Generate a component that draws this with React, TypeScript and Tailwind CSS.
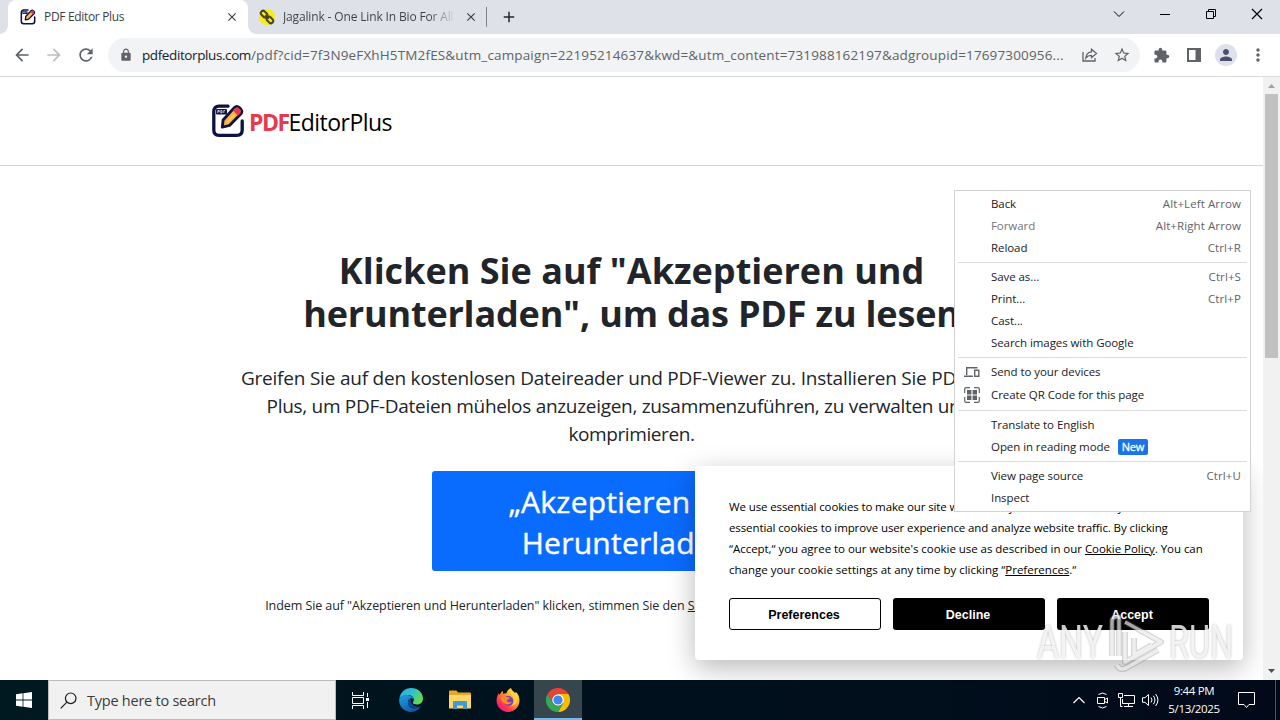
import React from 'react';
import {
  MdArrowBack,
  MdArrowForward,
  MdRefresh,
  MdLock,
  MdStarBorder,
  MdExtension,
  MdMoreVert,
  MdPerson,
  MdClose,
  MdAdd,
} from 'react-icons/md';

const PdfIcon = ({ className }: { className: string }) => (
  <svg viewBox="0 0 32 34" className={className} fill="none">
    <path d="M16 2.200H7Q1.800 2.200 1.800 7.600V26Q1.800 31.400 7 31.400H25Q30.200 31.400 30.200 26V17" stroke="#0d1240" strokeWidth="3.300" strokeLinecap="round" />
    <rect x="4" y="5" width="11" height="5.400" rx="1" fill="#0d1240" />
    <path d="M5.800 9V6.500h1.500v1.200H6M8.800 6.500v2.400H10V6.500zM13.200 6.500h-1.400V9" stroke="#fff" strokeWidth="0.700" />
    <path d="M10.300 23.200l.8-7.200L22.300 3.600q2.500-2.300 5 0l1.500 1.500q2.100 2.500 0 5L17.500 21.500z" fill="#fbb040" stroke="#0d1240" strokeWidth="2.800" strokeLinejoin="round" />
    <path d="M20.900 6.300l2.300-2.400q1.900-1.400 3.500 0l1.700 1.700q1.500 1.900 0 3.700L26 11.700z" fill="#e63950" />
    <path d="M15 18.500l7.500-8" stroke="#ffd27a" strokeWidth="1.400" />
  </svg>
);

const ChainIcon = () => (
  <svg viewBox="0 0 16 16" className="h-4 w-4" fill="none">
    <circle cx="8" cy="8" r="8" fill="#f8ec17" />
    <g transform="rotate(45 8 8)" stroke="#4a4420" strokeWidth="2">
      <rect x="0.200" y="5.700" width="7.400" height="4.600" rx="2.300" />
      <rect x="8.400" y="5.700" width="7.400" height="4.600" rx="2.300" />
      <path d="M5.500 8h5" />
    </g>
  </svg>
);

const TabStrip = () => (
  <div className="flex h-[34px] bg-[#dee1e8]">
    <div className="flex h-full w-[240px] ml-2 items-center rounded-t-lg bg-white pl-3 pr-[9px] relative">
      <span className="absolute -left-2 bottom-0 h-2 w-2 bg-[radial-gradient(circle_at_0_0,#dee1e8_7.5px,white_8px)]" />
      <span className="absolute -right-2 bottom-0 h-2 w-2 bg-[radial-gradient(circle_at_100%_0,#dee1e8_7.5px,white_8px)]" />
      <PdfIcon className="h-4 w-4" />
      <span className="ml-2 flex-1 text-[12px] tracking-[-0.33px] text-[#3c4043]">PDF Editor Plus</span>
      <MdClose className="h-3.5 w-3.5 text-[#3c4043]" />
    </div>
    <div className="flex h-full w-[239px] items-center pl-[11px] pr-[9px]">
      <ChainIcon />
      <span className="ml-2 w-[173px] overflow-hidden whitespace-nowrap text-[12px] tracking-[-0.15px] bg-[linear-gradient(90deg,#3c4043_84%,transparent)] bg-clip-text text-transparent">
        Jagalink - One Link In Bio For All
      </span>
      <MdClose className="ml-auto h-3.5 w-3.5 text-[#3c4043]" />
    </div>
    <span className="mt-[7px] h-5 w-px shrink-0 bg-[#808489] -ml-px" />
    <MdAdd className="ml-[13px] mt-2 h-[18px] w-[18px] text-[#25282c]" />
    <div className="ml-auto flex h-[28px] items-center text-black">
      <svg viewBox="0 0 46 28" className="h-7 w-[46px]" fill="none" stroke="currentColor">
        <path d="M18 11.500l5 5 5-5" />
      </svg>
      <svg viewBox="0 0 46 28" className="h-7 w-[46px]" fill="none" stroke="currentColor">
        <path d="M18 14.500h10" />
      </svg>
      <svg viewBox="0 0 46 28" className="h-7 w-[46px]" fill="none" stroke="currentColor">
        <path d="M18.500 11.500h7v7h-7zM20.500 11.500v-2h7v7h-2" />
      </svg>
      <svg viewBox="0 0 46 28" className="h-7 w-[46px]" fill="none" stroke="currentColor" strokeWidth="1.200">
        <path d="M18 9l10 10M28 9l-10 10" />
      </svg>
    </div>
  </div>
);

const Toolbar = () => (
  <div className="flex h-[43px] items-center border-b border-[#dadce0] bg-white text-[#5f6368]">
    <MdArrowBack className="ml-3 h-5 w-5" />
    <MdArrowForward className="ml-3 h-5 w-5 text-[#bcbec1]" />
    <MdRefresh className="ml-3 h-5 w-5" />
    <div className="ml-3 flex h-[34px] w-[1032px] items-center rounded-full bg-[#f1f3f4] pl-[11px] pr-[9px]">
      <MdLock className="h-3.5 w-3.5" />
      <span className="ml-[9px] w-[940px] whitespace-nowrap text-[13.5px] tracking-[0.145px]">
        <span className="text-[#202124] tracking-[-0.4px]">pdfeditorplus.com</span>
        /pdf?cid=7f3N9eFXhH5TM2fES&amp;utm_campaign=22195214637&amp;kwd=&amp;utm_content=731988162197&amp;adgroupid=17697300956...
      </span>
      <svg viewBox="0 0 16 16" className="h-4 w-4 shrink-0" fill="none" stroke="currentColor" strokeWidth="1.300">
        <path d="M1 5v9h12v-3M9.500 2.200l5 4.300-5 4.200V8.300Q6 8.200 3.800 11 4.500 5.200 9.500 4.800z" />
      </svg>
      <MdStarBorder className="ml-[15px] h-[18px] w-[18px] shrink-0" />
    </div>
    <MdExtension className="ml-[13px] h-[17px] w-[17px]" />
    <svg viewBox="0 0 14 14" className="ml-[17px] h-3.5 w-3.5">
      <path d="M0 0h14v14H0zM2 2v10h6.500V2z" fill="currentColor" fillRule="evenodd" />
    </svg>
    <span className="ml-3.5 flex h-[22px] w-[22px] items-center justify-center rounded-full bg-[#dee1ea] text-[#4b5070]">
      <MdPerson className="h-[18px] w-[18px]" />
    </span>
    <MdMoreVert className="ml-[11px] h-5 w-5" />
  </div>
);

const PageContent = () => (
  <main className="w-[1263px] bg-white text-[#212529]">
    <header className="flex h-[89px] items-center border-b border-[#d3d4d5] pl-[212px]">
      <PdfIcon className="h-[34px] w-8" />
      <span className="ml-[5px] mt-[2px] text-[23px] tracking-[-0.55px] text-black">
        <b className="font-bold tracking-[-1.5px] text-[#e63950]">PDF</b>EditorPlus
      </span>
    </header>
    <div className="flex flex-col items-center whitespace-nowrap pt-[83px] text-center">
      <h1 className="text-[36px] font-bold leading-[43px]">
        <span className="block">Klicken Sie auf "Akzeptieren und</span>
        <span className="block tracking-[-0.19px]">herunterladen", um das PDF zu lesen</span>
      </h1>
      <p className="mt-[29px] text-[19px] leading-[28px]">
        <span className="block tracking-[-0.21px]">Greifen Sie auf den kostenlosen Dateireader und PDF-Viewer zu. Installieren Sie PDF Editor</span>
        <span className="block tracking-[-0.3px]">Plus, um PDF-Dateien mühelos anzuzeigen, zusammenzuführen, zu verwalten und zu</span>
        <span className="block tracking-[-0.4px]">komprimieren.</span>
      </p>
      <button className="mt-[23px] h-[100px] w-[400px] rounded-[3px] bg-[#0a6cff] pt-px text-[30px] leading-[41px] tracking-[0.25px] text-white [-webkit-text-stroke:0.4px_white]">
        <span className="block">„Akzeptieren und</span>
        <span className="block">Herunterladen“</span>
      </button>
      <p className="mt-[25px] text-[12.5px] leading-[20px] tracking-[-0.075px]">
        Indem Sie auf "Akzeptieren und Herunterladen" klicken, stimmen Sie den <u>Servicebedingungen und der Datenschutzrichtlinie zu.</u>
      </p>
    </div>
  </main>
);

const Scrollbar = () => (
  <div className="flex w-[17px] flex-col items-center bg-[#f1f1f1]">
    <svg viewBox="0 0 17 17" className="h-[17px] w-[17px]">
      <path d="M5 11h7L8.500 7z" fill="#a3a3a3" />
    </svg>
    <div className="h-[264px] w-[13px] bg-[#c1c1c1]" />
    <svg viewBox="0 0 17 17" className="mt-auto h-[17px] w-[17px]">
      <path d="M5 6h7l-3.500 4z" fill="#505050" />
    </svg>
  </div>
);

const CookieBanner = () => (
  <div className="absolute left-[695px] top-[466px] h-[194px] w-[548px] rounded-[4px] bg-white px-[34px] pt-[30px] text-black shadow-[0_8px_28px_rgba(0,0,0,0.28)]">
    <p className="whitespace-nowrap text-[11.5px] leading-[21px]">
      <span className="block tracking-[-0.12px]">We use essential cookies to make our site work. With your consent, we may also use non-</span>
      <span className="block tracking-[-0.1px]">essential cookies to improve user experience and analyze website traffic. By clicking</span>
      <span className="block tracking-[-0.04px]">“Accept,“ you agree to our website's cookie use as described in our <u>Cookie Policy</u>. You can</span>
      <span className="block">change your cookie settings at any time by clicking “<u>Preferences</u>.“</span>
    </p>
    <div className="mt-[18px] flex gap-3 font-['Liberation_Sans',Arial,sans-serif] text-[12.5px] font-bold">
      <button className="h-8 w-[152px] rounded-[3px] border border-black bg-white pt-0.5 pr-0.5">Preferences</button>
      <button className="h-8 w-[152px] rounded-[3px] bg-black pt-0.5 pr-0.5 text-white">Decline</button>
      <button className="h-8 w-[152px] rounded-[3px] bg-black pt-0.5 pr-0.5 text-white">Accept</button>
    </div>
  </div>
);

type ItemProps = {
  label: string;
  shortcut?: string;
  disabled?: boolean;
  icon?: React.ReactNode;
  badge?: string;
  tall?: boolean;
};

const MenuItem = ({ label, shortcut, disabled, icon, badge, tall }: ItemProps) => (
  <div className={`flex items-center pr-[9px] ${tall ? 'h-6' : 'h-[22px]'}`}>
    <span className="flex w-[36px] pl-[9px] text-[#5f6368]">{icon}</span>
    <span className={disabled ? 'tracking-[-0.07px] text-[#747679]' : 'tracking-[-0.07px] text-[#202124]'}>{label}</span>
    {badge && <span className="ml-2 h-4 rounded-[2px] bg-[#1a73e8] px-1 text-[11px] tracking-[-0.3px] leading-4 text-white [-webkit-text-stroke:0.3px_white]">{badge}</span>}
    <span className="ml-auto tracking-[0.1px] text-[#5f6368]">{shortcut}</span>
  </div>
);

const Separator = () => <div className="mx-[3px] my-[3px] h-px bg-[#dadce0]" />;

const ContextMenu = () => (
  <div className="absolute left-[954px] top-[190px] h-[322px] w-[297px] whitespace-nowrap border border-[#d3d3d3] bg-white pt-[2px] text-[11.5px]">
    <MenuItem label="Back" shortcut="Alt+Left Arrow" />
    <MenuItem label="Forward" shortcut="Alt+Right Arrow" disabled />
    <MenuItem label="Reload" shortcut="Ctrl+R" />
    <Separator />
    <MenuItem label="Save as..." shortcut="Ctrl+S" />
    <MenuItem label="Print..." shortcut="Ctrl+P" />
    <MenuItem label="Cast..." />
    <MenuItem label="Search images with Google" />
    <Separator />
    <MenuItem
      label="Send to your devices"
      icon={
        <svg viewBox="0 0 16 12" className="h-3 w-4" fill="none" stroke="currentColor" strokeWidth="1.400">
          <path d="M13.500 1.700H2.700V9M0 10.300h9M10.700 4.200h4.100v6.100h-4.100z" />
        </svg>
      }
    />
    <MenuItem
      label="Create QR Code for this page"
      tall
      icon={
        <svg viewBox="0 0 16 16" className="h-4 w-4" fill="none" stroke="currentColor">
          <path d="M.7 6V2Q.7.7 2 .7h4M10 .7h4q1.300 0 1.300 1.300v4M15.300 10v4q0 1.300-1.300 1.300h-4M6 15.300H2Q.7 15.300.7 14v-4" strokeWidth="1.200" />
          <path d="M3 3h4.400v4.400H3zM8.600 3H13v4.400H8.600zM3 8.600h4.400V13H3zM8.600 8.600H13V13H8.600z" fill="currentColor" stroke="none" />
        </svg>
      }
    />
    <Separator />
    <MenuItem label="Translate to English" />
    <MenuItem label="Open in reading mode" badge="New" />
    <Separator />
    <MenuItem label="View page source" shortcut="Ctrl+U" />
    <MenuItem label="Inspect" />
  </div>
);

const Watermark = () => (
  <div className="absolute left-[1037px] top-[608px] flex h-[66px] w-[200px] items-center whitespace-nowrap font-['Roboto',sans-serif] text-[47px] leading-none text-white/80 [text-shadow:0_0_3px_rgba(0,0,0,0.3)]">
    <span className="w-[68px] origin-left scale-x-[0.72]">ANY</span>
    <svg viewBox="0 0 60 66" className="h-[66px] w-[60px] shrink-0" fill="none" strokeLinejoin="round">
      <g stroke="#777" strokeOpacity="0.3" strokeWidth="6">
        <path d="M7 48V14q0-6 7-5v39" />
        <path d="M20 14l36 20-36 20V24M29 30v17l18-10M12 57q3 7 11 2l30-17" />
      </g>
      <g stroke="#fff" strokeOpacity="0.6" strokeWidth="3.500">
        <path d="M7 48V14q0-6 7-5v39" />
        <path d="M20 14l36 20-36 20V24M29 30v17l18-10M12 57q3 7 11 2l30-17" />
      </g>
    </svg>
    <span className="ml-[4px] origin-left scale-x-[0.69]">RUN</span>
  </div>
);

const EdgeIcon = () => (
  <svg viewBox="0 0 24 24" className="h-6 w-6">
    <defs>
      <linearGradient id="edgeTop" x1="0" y1="0" x2="1" y2="0.5">
        <stop offset="0" stopColor="#2aa8e8" />
        <stop offset="0.55" stopColor="#2fc3c8" />
        <stop offset="1" stopColor="#64d954" />
      </linearGradient>
      <linearGradient id="edgeSide" x1="0" y1="0" x2="0.6" y2="1">
        <stop offset="0" stopColor="#1da1e6" />
        <stop offset="1" stopColor="#0f59a8" />
      </linearGradient>
    </defs>
    <path d="M.3 11C1 4.500 6 0 12.200 0 19 0 24 4.800 24 10.500c0 3.700-2.600 6-6 6-2.700 0-4.200-1-4.200-2 0-.6 1-1.200 1-3 0-2.600-2.500-4.500-6-4.500C5 7 1.500 8.600.3 11z" fill="url(#edgeTop)" />
    <path d="M.2 11.500C1.500 8.300 5 6.700 8.500 7c3.600.2 6 2.200 6.200 4.300-2-2-5.700-.7-5.700 3.200 0 4.300 4.400 7 9.300 5.600l3.400-1.300C19.500 22 16 24 12 24 5.300 24-.4 18.700.2 11.500z" fill="url(#edgeSide)" />
    <path d="M11.500 10.500c-2 1-2.700 2.500-2.500 4.500.5 4 5.500 6.600 12.700 3.700-3 .5-10.200-.5-10.200-8.200z" fill="#0c4a91" />
  </svg>
);

const FolderIcon = () => (
  <svg viewBox="0 0 22 20" className="h-5 w-[22px]">
    <path d="M0 1.500Q0 .5 1 .5h6.500l1.500 2h12q1 0 1 1V18H0z" fill="#e8a824" />
    <path d="M0 5h22v13.500H0z" fill="#ffd766" />
    <path d="M4 19v-7q0-1 1-1h12q1 0 1 1v7h-4v-3.500H8V19z" fill="#3f9ad6" />
  </svg>
);

const FirefoxIcon = () => (
  <svg viewBox="0 0 24 24" className="h-6 w-6">
    <defs>
      <linearGradient id="foxBody" x1="0.9" y1="0.1" x2="0.15" y2="0.95">
        <stop offset="0" stopColor="#fff44f" />
        <stop offset="0.4" stopColor="#ff9a2a" />
        <stop offset="0.75" stopColor="#ff3750" />
        <stop offset="1" stopColor="#e3128c" />
      </linearGradient>
    </defs>
    <path d="M15 0c.5 2 2.500 3.500 4 5l1-1c2.500 2.500 3.500 5.500 3.500 8.500C23.500 19 18.300 24 12 24S.5 19 .5 12.600C.5 9.500 1.600 7 3 5c.1 1 .3 1.500.6 2 .6-1.500 1.700-3 3.200-4l.5 3c1-.6 2-.8 3.200-.7C10.700 3.500 12.500 1 15 0z" fill="url(#foxBody)" />
    <circle cx="12.300" cy="13" r="5" fill="#7141d2" />
    <path d="M4.500 10c2-2 4.500-2 6.500-.7 1.500 0 2.500.1 2.800.6-.4 1.300-2.300 1.500-3 2.300.2 2 2.700 2.700 5 1.500-1 3-6.800 4-9 .3C5.500 13 5 11.500 4.500 10z" fill="#ff8a1e" />
    <path d="M13.500 6c2.500.5 4.500 2.500 4.700 5.500.2 3-1.200 5-3.200 6.500 4.500-.5 6.500-4 6-7-.5-3-3-5.500-6-6z" fill="#ffd43a" />
  </svg>
);

const ChromeIcon = () => (
  <svg viewBox="0 0 24 24" className="h-6 w-6">
    <path d="M12 6h10.400A12 12 0 0 1 12 24l5.200-9z" fill="#fbbc05" />
    <path d="M1.600 6l5.200 9A6 6 0 0 0 17.200 15L12 24A12 12 0 0 1 1.600 6z" fill="#34a853" />
    <path d="M1.600 6A12 12 0 0 1 22.400 6H12a6 6 0 0 0-5.200 9z" fill="#ea4335" />
    <circle cx="12" cy="12" r="5.800" fill="#fff" />
    <circle cx="12" cy="12" r="4.600" fill="#4285f4" />
  </svg>
);

const Taskbar = () => (
  <div className="flex h-10 bg-[linear-gradient(90deg,#001920,#000f1c_60%,#020a1a)] text-white">
    <div className="flex w-12 items-center justify-center">
      <svg viewBox="0 0 16 16" className="h-4 w-4" fill="#fff">
        <path d="M0 2.200l6.600-.9v6.200H0zM7.400 1.200L16 0v7.500H7.400zM0 8.400h6.600v6.300L0 13.800zM7.400 8.400H16V16l-8.600-1.200z" />
      </svg>
    </div>
    <div className="flex w-[288px] items-center border border-[#b9bcbd] bg-[#f1f1f1] pl-[11px] text-[#3c3c3c]">
      <svg viewBox="0 0 17 17" className="h-[17px] w-[17px]" fill="none" stroke="#1c1c1c" strokeWidth="1.200">
        <circle cx="10.700" cy="6.300" r="5.300" />
        <path d="M6.900 10.100L.7 16.300" />
      </svg>
      <span className="ml-[10px] mt-[2px] text-[14.5px] tracking-[-0.24px]">Type here to search</span>
    </div>
    <div className="flex w-12 items-center justify-center">
      <svg viewBox="0 0 17 17" className="h-[17px] w-[17px]" fill="none" stroke="#fff">
        <path d="M.5 0v3.500h11V0M.5 5.500h11v6H.5zM.5 17v-3.500h11V17M15.500 1v4M15.500 10v6" />
        <path d="M14 6h3v3h-3z" fill="#fff" stroke="none" />
      </svg>
    </div>
    <div className="flex w-[54px] items-center justify-center"><EdgeIcon /></div>
    <div className="flex w-[43px] items-center justify-center"><FolderIcon /></div>
    <div className="flex w-[53px] items-center justify-center"><FirefoxIcon /></div>
    <div className="flex w-12 items-center justify-center border-b-2 border-[#76b9ed] bg-[#37454d] pt-[2px]"><ChromeIcon /></div>
    <div className="ml-auto flex items-center">
      <svg viewBox="0 0 12 8" className="h-2 w-3" fill="none" stroke="#fff" strokeWidth="1.200">
        <path d="M.5 7L6 1.500 11.500 7" />
      </svg>
      <svg viewBox="0 0 12 17" className="ml-3 h-[17px] w-3" fill="none" stroke="#fff">
        <path d="M.5 5.500h7v6h-7zM7.500 7.700l3-1.700v5l-3-1.700M1.500 2.500q4-3 8 0M1.500 14.500q4 3 8 0" />
      </svg>
      <svg viewBox="0 0 17 15" className="ml-[9px] h-[15px] w-[17px]" fill="none" stroke="#fff">
        <path d="M6 2.500h10.500v8H4.500V6M10.500 10.500v3M6 13.500h9M.5.500h4v4h-4zM2.500 4.500v9h2" />
      </svg>
      <svg viewBox="0 0 17 14" className="ml-[7px] h-3.5 w-[17px]" fill="none" stroke="#fff">
        <path d="M.5 4.700h2.500L6.500 1.500v11L3 9.300H.5zM9 4.500q2 2.500 0 5M11.300 2.800q3.300 4.200 0 8.400M13.600 1q4.700 6 0 12" />
      </svg>
      <div className="ml-2 w-[54px] whitespace-nowrap text-center text-[11.5px] leading-[18px] tracking-[-0.35px]">
        <div>9:44 PM</div>
        <div>5/13/2025</div>
      </div>
      <svg viewBox="0 0 17 17" className="ml-[17px] h-[17px] w-[17px]" fill="none" stroke="#fff">
        <path d="M.5.500h16v12H11l-2.500 3-2.500-3H.5z" />
      </svg>
      <span className="ml-5 mr-1 h-10 w-px bg-[#4a5361]" />
    </div>
  </div>
);

const App: React.FC = () => {
  return (
    <div className="relative flex h-[720px] w-[1280px] flex-col overflow-hidden bg-white font-['Open_Sans','Noto_Sans',sans-serif]">
      <TabStrip />
      <Toolbar />
      <div className="flex h-[603px] overflow-hidden">
        <PageContent />
        <Scrollbar />
      </div>
      <Taskbar />
      {/* clips the banner's shadow to the page viewport */}
      <div className="absolute top-[77px] right-[17px] bottom-10 left-0 overflow-hidden">
        <div className="absolute -top-[77px] left-0">
          <CookieBanner />
        </div>
      </div>
      <ContextMenu />
      <Watermark />
    </div>
  );
};

export default App;
